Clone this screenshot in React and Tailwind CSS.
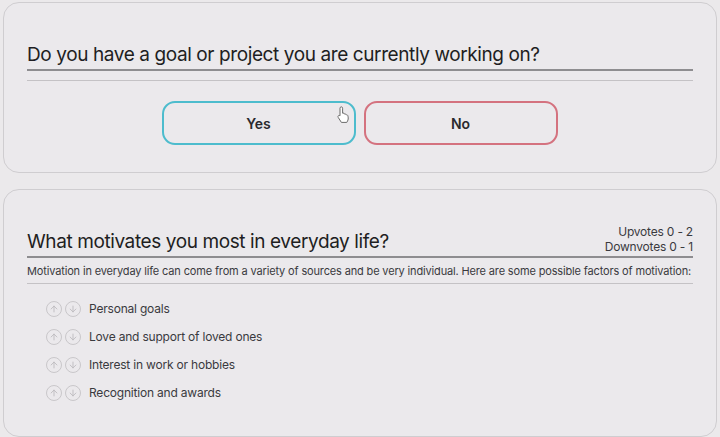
import { ArrowUp, ArrowDown } from "lucide-react";

const factors = [
  "Personal goals",
  "Love and support of loved ones",
  "Interest in work or hobbies",
  "Recognition and awards",
];

function VoteButton({ up }) {
  const Icon = up ? ArrowUp : ArrowDown;
  return (
    <button className="w-[16px] h-[16px] rounded-full border border-[#c9c7ca] flex items-center justify-center text-[#b9b7ba]">
      <Icon size={10} strokeWidth={2} />
    </button>
  );
}

function Cursor() {
  return (
    <svg
      width="14"
      height="18"
      viewBox="0 0 14 18"
      className="absolute left-[336px] top-[106px]"
    >
      <path
        d="M4 2.2c0-.8.6-1.4 1.3-1.4s1.3.6 1.3 1.4v5l.4-.1c.7-.2 1.4.2 1.6.8l.1.3c.6-.3 1.3 0 1.6.6.6-.2 1.3.2 1.5.8l.3 1.2c.3 1.5.1 3-.6 4.3l-.7 1.3H5.4L2.2 11.4c-.4-.6-.3-1.4.3-1.8.5-.3 1.1-.2 1.5.2V2.2z"
        fill="#fff"
        stroke="#6b6b6b"
        strokeWidth="1"
      />
    </svg>
  );
}

export default function App() {
  return (
    <div
      className="relative w-[720px] h-[437px] bg-[#ebe9eb] px-[3px] pt-[2px] text-[#222]"
      style={{ fontFamily: "Inter, 'Noto Sans', sans-serif" }}
    >
      {/* Frage 1 */}
      <div className="rounded-[16px] border border-[#cfcdd0] bg-[#ebe9ec] px-[23px] pt-[40px] pb-[27px]">
        <h2 className="text-[19px] leading-[24px] tracking-[-0.4px] text-[#1e1e22] border-b-2 border-[#8e8d90] pb-[2px]">
          Do you have a goal or project you are currently working on?
        </h2>
        <div className="mt-[9px] h-px bg-[#c4c2c5]" />
        <div className="flex justify-center gap-[8px] mt-[20px] pr-[1px]">
          <button className="w-[194px] h-[44px] rounded-[13px] border-2 border-[#4dbccd] text-[14px] font-semibold text-[#2a2a2e]">
            Yes
          </button>
          <button className="w-[194px] h-[44px] rounded-[13px] border-2 border-[#d4727f] text-[14px] font-semibold text-[#2a2a2e]">
            No
          </button>
        </div>
      </div>

      {/* Frage 2 */}
      <div className="mt-[16px] rounded-[16px] border border-[#cfcdd0] bg-[#ebe9ec] px-[23px] pt-[34px] pb-[34px]">
        <div className="flex items-end justify-between border-b-2 border-[#8e8d90] pb-[2px]">
          <h2 className="text-[19px] leading-[24px] tracking-[-0.4px] text-[#1e1e22]">
            What motivates you most in everyday life?
          </h2>
          <div className="text-right text-[12px] leading-[15px] tracking-[-0.2px] text-[#3a3a3e]">
            <div>Upvotes 0 - 2</div>
            <div>Downvotes 0 - 1</div>
          </div>
        </div>
        <p className="mt-[6px] text-[11px] leading-[14px] text-[#3a3a3e] border-b border-[#c4c2c5] pb-[5px] tracking-[-0.15px] whitespace-nowrap">
          Motivation in everyday life can come from a variety of sources and be very individual. Here are some possible factors of motivation:
        </p>
        <ul className="mt-[16px] pl-[19px] flex flex-col gap-[10px]">
          {factors.map((f) => (
            <li key={f} className="flex items-center h-[18px]">
              <div className="flex gap-[3px]">
                <VoteButton up />
                <VoteButton />
              </div>
              <span className="ml-[8px] text-[12px] tracking-[-0.2px] text-[#3a3a3e]">
                {f}
              </span>
            </li>
          ))}
        </ul>
      </div>

      <Cursor />
    </div>
  );
}
